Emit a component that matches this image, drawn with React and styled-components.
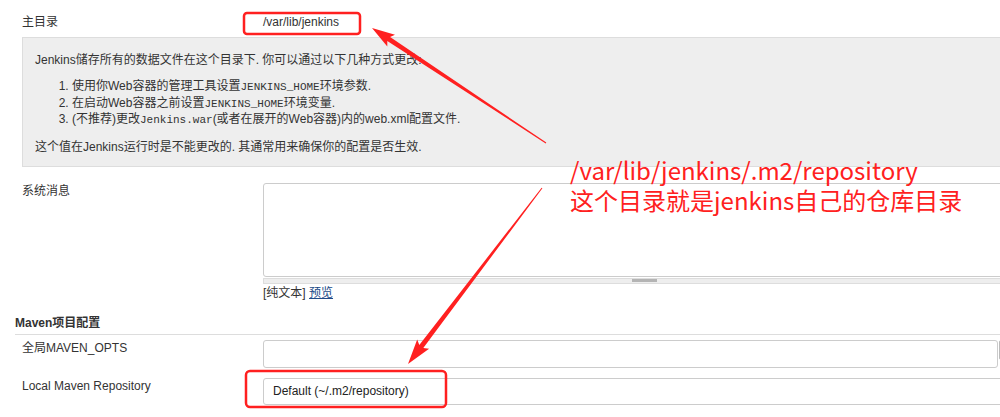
import React from "react";
import styled, { createGlobalStyle } from "styled-components";

const GlobalStyle = createGlobalStyle`
  html, body { margin: 0; padding: 0; background: #fff; overflow: hidden; }
  body {
    font-family: "Liberation Sans", "Noto Sans CJK SC", Arial, sans-serif;
    font-size: 12px;
    color: #333;
  }
`;

const Page = styled.div`
  position: relative;
  width: 1026px;
  height: 417px;
  padding: 14px 0 0 15px;
  box-sizing: border-box;
`;

const Row = styled.div`
  display: grid;
  grid-template-columns: 241px 1fr;
  padding-left: 7px;
  margin-top: ${(p) => p.$top || 0}px;
  line-height: 16px;
`;

const Label = styled.div`
  color: #333;
`;

const Field = styled.div`
  display: flex;
  flex-direction: column;
  min-width: 0;
`;

const Value = styled.div`
  padding-left: 0;
`;

const HelpBox = styled.div`
  margin: 7px 0 0 7px;
  background: #eee;
  border: 1px solid #ddd;
  padding: 14px 12px 11px 12px;
  line-height: 16px;
  color: #333;
`;

const HelpPara = styled.p`
  margin: ${(p) => p.$top || 0}px 0 0 0;
`;

const HelpList = styled.ol`
  margin: 11px 0 0 0;
  padding-left: 37px;
  line-height: 15.5px;
`;

const Mono = styled.code`
  font-family: "Liberation Mono", "Noto Sans CJK SC", monospace;
  font-size: 11px;
`;

const TextArea = styled.textarea`
  display: block;
  box-sizing: border-box;
  width: 100%;
  height: 94px;
  border: 1px solid #ccc;
  border-radius: 3px;
  resize: none;
  margin: 0;
  background: #fff;
`;

const ResizeBar = styled.div`
  margin-top: 1px;
  height: 6px;
  box-sizing: border-box;
  background: #eee;
  border: 1px solid #ddd;
  display: flex;
  align-items: center;
  justify-content: center;
`;

const Grip = styled.div`
  width: 25px;
  height: 3px;
  background: #b4b4b4;
`;

const LinkLine = styled.div`
  margin-top: 1px;
  line-height: 16px;
`;

const Link = styled.a`
  color: #204a87;
  text-decoration: underline;
`;

const SectionHeader = styled.div`
  margin-top: 14px;
  font-weight: bold;
  line-height: 16px;
  padding-bottom: 3px;
  border-bottom: 1px solid #ddd;
  color: #333;
`;

const InputLine = styled.div`
  display: flex;
  align-items: flex-start;
  gap: 1px;
`;

const TextInput = styled.input`
  flex: 1;
  min-width: 0;
  box-sizing: border-box;
  height: 28px;
  border: 1px solid #ccc;
  border-radius: 3px;
  margin: 0;
  background: #fff;
`;

const ExpandButton = styled.button`
  width: 27px;
  height: 20px;
  border: 1px solid #bbb;
  border-radius: 2px;
  background: #e6e6e6;
  padding: 0;
  margin: 0;
`;

const Select = styled.select`
  appearance: none;
  -webkit-appearance: none;
  box-sizing: border-box;
  width: 100%;
  height: 27px;
  border: 1px solid #ccc;
  border-radius: 3px;
  padding: 0 0 0 9px;
  margin: 0;
  background: #fff;
  font-family: "Liberation Sans", "Noto Sans CJK SC", Arial, sans-serif;
  font-size: 12px;
  color: #222;
`;

const Overlay = styled.div`
  position: absolute;
  left: 0;
  top: 0;
  width: 1000px;
  height: 417px;
  pointer-events: none;
`;

const Drawing = styled.svg`
  position: absolute;
  left: 0;
  top: 0;
`;

const Note = styled.div`
  position: absolute;
  left: 570px;
  top: 155px;
  font-family: "Noto Sans CJK SC", "Liberation Sans", sans-serif;
  font-size: 24px;
  line-height: 30px;
  color: #ff2020;
  white-space: nowrap;
`;

const RED = "#ff2020";

function arrowPoints(x1, y1, x2, y2, tailW, neckW, headLen, headW) {
  const dx = x2 - x1;
  const dy = y2 - y1;
  const L = Math.hypot(dx, dy);
  const ux = dx / L;
  const uy = dy / L;
  const nx = -uy;
  const ny = ux;
  const bx = x2 - ux * headLen;
  const by = y2 - uy * headLen;
  const wx = x2 - ux * (headLen + 3);
  const wy = y2 - uy * (headLen + 3);
  const p = (x, y) => `${x.toFixed(1)},${y.toFixed(1)}`;
  return [
    p(x1 + (nx * tailW) / 2, y1 + (ny * tailW) / 2),
    p(bx + (nx * neckW) / 2, by + (ny * neckW) / 2),
    p(wx + (nx * headW) / 2, wy + (ny * headW) / 2),
    p(x2, y2),
    p(wx - (nx * headW) / 2, wy - (ny * headW) / 2),
    p(bx - (nx * neckW) / 2, by - (ny * neckW) / 2),
    p(x1 - (nx * tailW) / 2, y1 - (ny * tailW) / 2),
  ].join(" ");
}

export default function App() {
  return (
    <>
      <GlobalStyle />
      <Page>
        <Row>
          <Label>主目录</Label>
          <Value>/var/lib/jenkins</Value>
        </Row>
        <HelpBox>
          <HelpPara>Jenkins储存所有的数据文件在这个目录下. 你可以通过以下几种方式更改:</HelpPara>
          <HelpList>
            <li>使用你Web容器的管理工具设置<Mono>JENKINS_HOME</Mono>环境参数.</li>
            <li>在启动Web容器之前设置<Mono>JENKINS_HOME</Mono>环境变量.</li>
            <li>(不推荐)更改<Mono>Jenkins.war</Mono>(或者在展开的Web容器)内的web.xml配置文件.</li>
          </HelpList>
          <HelpPara $top={10}>这个值在Jenkins运行时是不能更改的. 其通常用来确保你的配置是否生效.</HelpPara>
        </HelpBox>
        <Row $top={16}>
          <Label>系统消息</Label>
          <Field>
            <TextArea />
            <ResizeBar>
              <Grip />
            </ResizeBar>
            <LinkLine>
              [纯文本] <Link href="#">预览</Link>
            </LinkLine>
          </Field>
        </Row>
        <SectionHeader>Maven项目配置</SectionHeader>
        <Row $top={5}>
          <Label>全局MAVEN_OPTS</Label>
          <InputLine>
            <TextInput />
            <ExpandButton aria-label="expand" />
          </InputLine>
        </Row>
        <Row $top={10}>
          <Label>Local Maven Repository</Label>
          <Select defaultValue="default">
            <option value="default">Default (~/.m2/repository)</option>
          </Select>
        </Row>
        <Overlay>
          <Drawing width="1000" height="417" viewBox="0 0 1000 417">
            <rect x="244" y="13" width="116" height="21" rx="3" fill="none" stroke={RED} strokeWidth="2.5" />
            <rect x="246" y="371" width="200" height="36" rx="4" fill="none" stroke={RED} strokeWidth="2.5" />
            <polygon points={arrowPoints(546, 143, 372, 28, 1, 5, 20, 14)} fill={RED} />
            <polygon points={arrowPoints(542, 188, 408, 364, 1, 5, 22, 15)} fill={RED} />
          </Drawing>
          <Note>
            <div>/var/lib/jenkins/.m2/repository</div>
            <div>这个目录就是jenkins自己的仓库目录</div>
          </Note>
        </Overlay>
      </Page>
    </>
  );
}
